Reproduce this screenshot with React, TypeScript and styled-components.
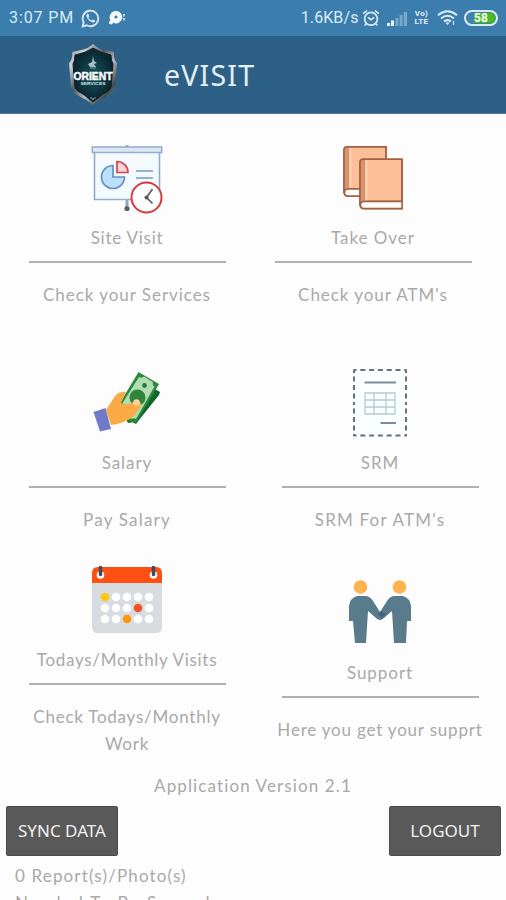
import React from 'react';
import styled, { createGlobalStyle } from 'styled-components';

const GlobalStyle = createGlobalStyle`
  * { box-sizing: border-box; }
  html, body { margin: 0; overflow: hidden; background: #fdfdfd; }
`;

const Screen = styled.div`
  width: 506px;
  height: 900px;
  overflow: hidden;
  display: flex;
  flex-direction: column;
  background: #fdfdfd;
  color: #a9a9a9;
  font: 400 17px/27px Lato, sans-serif;
`;

const StatusBar = styled.div`
  flex: none;
  height: 36px;
  padding: 0 8px 0 9px;
  display: flex;
  align-items: center;
  justify-content: space-between;
  background: #3b7dad;
  color: #dcebf5;
  font: 400 16px/36px Roboto, sans-serif;
`;

const StatusGroup = styled.div<{ $gap: number }>`
  display: flex;
  align-items: center;
  gap: ${(p) => p.$gap}px;
  svg { display: block; }
`;

const StatusText = styled.span<{ $spacing: number; $pull?: number }>`
  margin-right: -${(p) => p.$pull ?? 0}px;
  letter-spacing: ${(p) => p.$spacing}px;
`;

const Header = styled.header`
  flex: none;
  height: 78px;
  padding-left: 68px;
  display: flex;
  align-items: center;
  gap: 46px;
  background: #2c6087;
  border-bottom: 1px solid #53799a;
`;

const Title = styled.h1`
  margin: 0;
  color: #e6eff6;
  font: 400 28.5px/36px "Noto Sans", sans-serif;
  letter-spacing: 1.2px;
`;

const Columns = styled.main`
  flex: none;
  height: 658px;
  padding-top: 30px;
  display: grid;
  grid-template-columns: 254px 252px;
`;

const Column = styled.div`
  display: flex;
  flex-direction: column;
`;

const Card = styled.section<{ $height?: number; $shift?: number; $top?: number }>`
  flex: none;
  height: ${(p) => p.$height ?? 225}px;
  margin-top: ${(p) => p.$top ?? 0}px;
  margin-left: ${(p) => p.$shift ?? 0}px;
  display: flex;
  flex-direction: column;
  align-items: center;
  text-align: center;
`;

const IconBox = styled.div`
  height: 80px;
  svg { display: block; }
`;

const Label = styled.div<{ $spacing?: number }>`
  letter-spacing: ${(p) => p.$spacing ?? 0.95}px;
  white-space: pre-line;
`;

const Rule = styled.hr`
  width: 197px;
  height: 2px;
  margin: 10px 0 18px;
  border: 0;
  background: #b0b0b0;
`;

const Version = styled.div`
  flex: none;
  height: 34px;
  text-align: center;
  letter-spacing: 1.12px;
`;

const Actions = styled.div`
  flex: none;
  display: flex;
  justify-content: space-between;
  padding: 0 5px 0 6px;
`;

const Button = styled.button`
  width: 112px;
  height: 50px;
  padding: 0;
  border: 1px solid #4b4b4c;
  border-radius: 2px;
  background: #59595a;
  color: #f0f0f0;
  font: 400 17px/22px "Noto Sans", sans-serif;
  white-space: nowrap;
`;

const SyncStatus = styled.div`
  padding: 6px 15px 0;
`;

const SyncLine = styled.div<{ $spacing: number }>`
  letter-spacing: ${(p) => p.$spacing}px;
`;

const WhatsAppIcon = () => (
  <svg width="19" height="19" viewBox="0 0 19 19" fill="none" stroke="#dcebf5">
    <path d="M1.6 17.4l1.1-4.1A7.8 7.8 0 1 1 5.8 16.3z" strokeWidth="1.8" />
    <path d="M6.2 4.8c-1.6 1.5-.3 4.4 1.7 6.4s4.6 3 6 1.5l.2-1.1-2.3-1.2-1.2 1.1c-1.5-.6-2.6-1.7-3.2-3.1l.9-1.1-1-2.5z" fill="#dcebf5" stroke="none" />
  </svg>
);

const ChatIcon = () => (
  <svg width="18" height="16" viewBox="0 0 18 16">
    <path d="M8 1a6.2 6.2 0 1 1-3 11.6 2 2 0 1 1-2.500-2A6.400 6.400 0 0 1 8 1z" fill="#f3f8fc" />
    <circle cx="8" cy="7" r="1.600" fill="#3b7dad" />
    <path d="M16 4v2.500M16 8v2.500" stroke="#dcebf5" strokeWidth="1.6" />
  </svg>
);

const AlarmIcon = () => (
  <svg width="18" height="18" viewBox="0 0 18 18" fill="none" stroke="#dcebf5" strokeWidth="1.7">
    <circle cx="9" cy="9.8" r="6.4" />
    <path d="M1.2 4.7L5 1.6M16.8 4.7L13 1.6M5.8 8.4L9 10.8l3.2-2.4M4.4 14.5l-1.6 2M13.6 14.5l1.6 2" />
  </svg>
);

const SignalIcon = () => (
  <svg width="20" height="15" viewBox="0 0 20 15">
    <path d="M0 12h3v3H0zM4 9.5h3V15H4z" fill="#eef6fb" />
    <path d="M8.4 7h3v8h-3zM12.6 4h3v11h-3zM16.8 1H20v14h-3.2z" fill="#7ba9ca" />
  </svg>
);

const NetworkTag = styled.div`
  width: 17px;
  display: flex;
  flex-direction: column;
  align-items: center;
  color: #e3eff7;
  font: 700 8px/8px Roboto, sans-serif;
  letter-spacing: 0.3px;
`;

const WifiIcon = () => (
  <svg width="21" height="16" viewBox="0 0 21 16" fill="none" stroke="#dcebf5" strokeWidth="2">
    <path d="M1 5.2Q10.5-2.6 20 5.2M4 8.5q6.5-5.4 13 0M7 11.6q3.5-3 7 0" />
    <path d="M8.3 12.6h4.4L10.5 15z" fill="#dcebf5" stroke="none" />
    <path d="M16.5 11v4" strokeWidth="1.2" />
  </svg>
);

const Battery = styled.div`
  width: 34px;
  height: 16px;
  border: 2px solid #dcebf5;
  border-radius: 8px;
  background: linear-gradient(90deg, #4384ac 0 28%, #45bd1b 28%);
  box-shadow: inset 0 0 0 1px #3b7dad;
  color: #fff;
  font: 700 12px/12px Roboto, sans-serif;
  text-align: center;
`;

const ShieldText = styled.text`
  font: 900 10px "Liberation Sans", sans-serif;
  fill: #fff;
  stroke: #fff;
  stroke-width: 0.4px;
`;

const ShieldCaption = styled.text`
  font: 700 4px "Liberation Sans", sans-serif;
  fill: #dce6e8;
`;

const ShieldLogo = () => (
  <svg width="50" height="64" viewBox="0 0 50 64">
    <defs>
      <linearGradient id="rim" x1="0" y1="0" x2="1" y2="1">
        <stop offset="0" stopColor="#6c7479" />
        <stop offset="0.2" stopColor="#d3d2d3" />
        <stop offset="0.42" stopColor="#4f5860" />
        <stop offset="0.6" stopColor="#b8babd" />
        <stop offset="0.8" stopColor="#42494f" />
        <stop offset="1" stopColor="#b9b9ba" />
      </linearGradient>
      <radialGradient id="face">
        <stop offset="0" stopColor="#16545d" />
        <stop offset="1" stopColor="#08242f" />
      </radialGradient>
    </defs>
    <path d="M25 1q5 5 12 6l9 2q-1 7 3 11l-2 24q-1 5-8 9-7 4-14 9-6-5-14-9-7-4-8-9L1 20q4-4 3-11l9-2q7-1 12-6z" fill="url(#rim)" />
    <path d="M25 5q7 5 18 7 0 6 2 9l-2 23q-1 4-8 7l-10 8-10-8q-7-3-8-7L5 21q2-3 2-9 11-2 18-7z" fill="url(#face)" stroke="#111f27" />
    <path d="M20 21l4-2 1-6 1 5 3 2-3 1 2 3h-6zM22 24l2-3" fill="#a9bec2" />
    <path d="M22 25h6M22 55h2l1 2 1-2h2" stroke="#83989f" strokeWidth="1" fill="none" />
    <ShieldText x="25" y="37" textAnchor="middle" textLength="39" lengthAdjust="spacingAndGlyphs">ORIENT</ShieldText>
    <ShieldCaption x="25" y="42" textAnchor="middle" textLength="25" lengthAdjust="spacingAndGlyphs">SERVICES</ShieldCaption>
  </svg>
);

const PresentationIcon = () => (
  <svg width="72" height="72" viewBox="0 0 72 72">
    <path d="M36 56v6" stroke="#8da6c6" strokeWidth="3" />
    <circle cx="36" cy="64.5" r="2.6" fill="#55606b" />
    <path d="M3.5 8h65v47.500h-65z" fill="#f2fafe" stroke="#92abc9" strokeWidth="1.6" />
    <path d="M1.300 3h69.400v5.500H1.300z" fill="#dce9f5" stroke="#92abc9" strokeWidth="1.500" />
    <path d="M34.500 1h3v2h-3z" fill="#92abc9" />
    <path d="M22 21.500V33h11.500A11.500 11.500 0 1 1 22 21.500z" fill="#bbe0fc" stroke="#698fbd" strokeWidth="1.700" />
    <path d="M26 17.500a11 11 0 0 1 11 11H26z" fill="#fdd3d5" stroke="#d2454b" strokeWidth="1.700" />
    <path d="M45 27h17M45 34h17" stroke="#7898c4" strokeWidth="1.700" />
    <circle cx="55.500" cy="53.500" r="15" fill="#fefefe" stroke="#d43a3e" strokeWidth="2" />
    <path d="M61.500 45l-6 8.500 6 6" fill="none" stroke="#59615f" strokeWidth="1.700" />
    <circle cx="55.500" cy="53.500" r="2" fill="#505854" />
  </svg>
);

const Book = ({ x, y }: { x: number; y: number }) => (
  <g transform={`translate(${x} ${y})`} stroke="#a16242" strokeWidth="1.500">
    <path d="M4 .8h39v42H5q-4 0-4 4V4Q1 .8 4 .8z" fill="#fcbf97" />
    <path d="M1 4Q1 .8 4 .8h2v42H5q-4 0-4 4z" fill="#d9926b" stroke="none" />
    <path d="M7.500 2v40" stroke="#ffd9bd" />
    <path d="M4 .8h39v49.500H5q-4 0-4-4V4Q1 .8 4 .8z" fill="none" />
    <path d="M43 43v7H5q-3.500 0-3.500-3.500T5 43z" fill="#fffdfb" />
  </g>
);

const BooksIcon = () => (
  <svg width="62" height="72" viewBox="0 0 62 72">
    <Book x={1} y={2} />
    <Book x={17} y={14.500} />
  </svg>
);

const SalaryIcon = () => (
  <svg width="72" height="72" viewBox="0 0 72 72">
    <path d="M64 20l5 3-1 3-20 25-3 4-4-2-4 1-2-4z" fill="#12652b" />
    <path d="M47.500 3l20.500 12-23 39-3-1-3 1-10-20z" fill="#2b873b" />
    <path d="M48 8q3 1.500 5-.5l9 5.500q-1 3 1.500 4.500L45 50q-2-1.500-4.500 0L31.500 34z" fill="#b0dcb2" />
    <circle cx="53.500" cy="16.500" r="2.400" fill="#23803b" />
    <circle cx="46.500" cy="28.500" r="8" fill="#2f843e" />
    <path d="M15 41L24 27q5-5 11-4l-5 11q7 3 12-1 4-3 7 0 2 2 0 5-4 8-10 12-9 5-19 6z" fill="#fbab45" />
    <circle cx="45.500" cy="33.500" r="3.200" fill="#ffd3a1" />
    <path d="M2.500 43l12-4 5.500 21-11 2.500z" fill="#707bc5" />
  </svg>
);

const FormIcon = () => (
  <svg width="56" height="72" viewBox="0 0 56 72" fill="none">
    <path d="M2 1h52v65.500H2z" fill="#fcffff" />
    <path d="M1.500 1h53M1.500 66.500h53" stroke="#63717c" strokeWidth="2" strokeDasharray="3 3.800 5 3.800 5 3.800 5 3.800 5 3.800 5 3.800 3" />
    <path d="M2 1v66M54 1v66" stroke="#63717c" strokeWidth="2" strokeDasharray="3 3.500 5 3.500 5 3.500 5 3.500" />
    <path d="M12.500 13.500H44M28.500 54H44" stroke="#778e9c" strokeWidth="2" />
    <path d="M13 24h30v21H13zM13 31h30M13 38h30M22 24v21M34 24v21" stroke="#b2cad6" strokeWidth="1.300" />
  </svg>
);

const dotColor: Record<number, string> = { 0: '#fdc80b', 8: '#f45124', 12: '#fb970b' };

const CalendarIcon = () => (
  <svg width="72" height="72" viewBox="0 0 72 72">
    <path d="M1 15h70v46q0 6-6 6H7q-6 0-6-6z" fill="#d8dce1" />
    <path d="M1 17V7q0-6 6-6h58q6 0 6 6v10z" fill="#fd5013" />
    {[9.500, 62.500].map((x) => (
      <g key={x}>
        <circle cx={x} cy="9" r="3.800" fill="#fff" />
        <path d={`M${x} 1.500v7`} stroke="#42485e" strokeWidth="3.500" strokeLinecap="round" />
      </g>
    ))}
    {Array.from({ length: 15 }, (_, i) => (
      <circle key={i} cx={14 + (i % 5) * 11} cy={31 + Math.floor(i / 5) * 11} r="4.300" fill={dotColor[i] ?? '#fff'} />
    ))}
  </svg>
);

const SupportIcon = () => (
  <svg width="64" height="72" viewBox="0 0 64 72">
    <circle cx="12.500" cy="8" r="6.800" fill="#ffb350" />
    <circle cx="51.500" cy="8" r="6.800" fill="#ffb350" />
    <path d="M9 17h8q5 0 8 5l7 11 7-11q3-5 8-5h8q7 2 8 10v15h-4l-1 22H46l-2-32-8 7q-4 4-8 0l-8-7-2 32H7L5 42H1V27q1-8 8-10z" fill="#597b8c" />
    <path d="M30 35l3-3 5 3-4 4z" fill="#456574" />
  </svg>
);

export default function App() {
  return (
    <Screen>
      <GlobalStyle />
      <StatusBar>
        <StatusGroup $gap={8}>
          <StatusText $spacing={0.9} $pull={1}>3:07 PM</StatusText>
          <WhatsAppIcon />
          <ChatIcon />
        </StatusGroup>
        <StatusGroup $gap={6.5}>
          <StatusText $spacing={0.1} $pull={3}>1.6KB/s</StatusText>
          <AlarmIcon />
          <SignalIcon />
          <NetworkTag><span>Vo)</span><span>LTE</span></NetworkTag>
          <WifiIcon />
          <Battery>58</Battery>
        </StatusGroup>
      </StatusBar>
      <Header>
        <ShieldLogo />
        <Title>eVISIT</Title>
      </Header>
      <Columns>
        <Column>
          <Card>
            <IconBox><PresentationIcon /></IconBox>
            <Label $spacing={0.75}>Site Visit</Label>
            <Rule />
            <Label>Check your Services</Label>
          </Card>
          <Card $height={197}>
            <IconBox><SalaryIcon /></IconBox>
            <Label>Salary</Label>
            <Rule />
            <Label $spacing={1.2}>Pay Salary</Label>
          </Card>
          <Card>
            <IconBox><CalendarIcon /></IconBox>
            <Label $spacing={0.7}>Todays/Monthly Visits</Label>
            <Rule />
            <Label $spacing={0.75}>{'Check Todays/Monthly\nWork'}</Label>
          </Card>
        </Column>
        <Column>
          <Card $shift={-14}>
            <IconBox><BooksIcon /></IconBox>
            <Label>Take Over</Label>
            <Rule />
            <Label>{"Check your ATM's"}</Label>
          </Card>
          <Card>
            <IconBox><FormIcon /></IconBox>
            <Label>SRM</Label>
            <Rule />
            <Label $spacing={1.2}>{"SRM For ATM's"}</Label>
          </Card>
          <Card $top={-15}>
            <IconBox><SupportIcon /></IconBox>
            <Label>Support</Label>
            <Rule />
            <Label $spacing={0.8}>Here you get your supprt</Label>
          </Card>
        </Column>
      </Columns>
      <Version>Application Version 2.1</Version>
      <Actions>
        <Button>SYNC DATA</Button>
        <Button>LOGOUT</Button>
      </Actions>
      <SyncStatus>
        <SyncLine $spacing={1.15}>0 Report(s)/Photo(s)</SyncLine>
        <SyncLine $spacing={1.8}>Needed To Be Synced</SyncLine>
      </SyncStatus>
    </Screen>
  );
}
